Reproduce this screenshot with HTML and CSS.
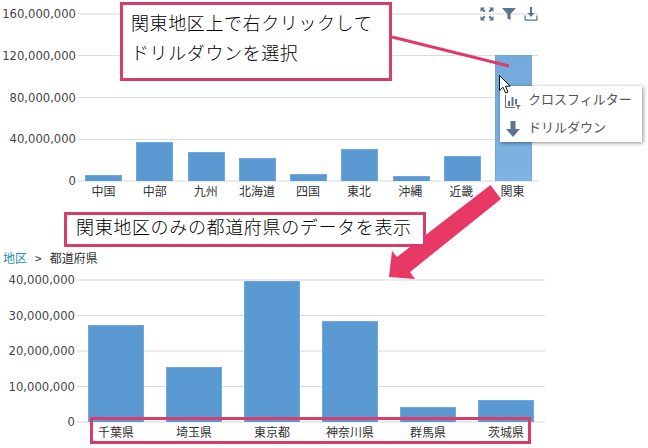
FILE: index.html
```html
<!DOCTYPE html>
<html lang="ja">
<head>
<meta charset="utf-8">
<title>ドリルダウン</title>
<link rel="stylesheet" href="styles.css">
</head>
<body>
<main class="stage">
  <section class="chart chart-top">
    <div class="y-axis">
      <span>160,000,000</span><span>120,000,000</span><span>80,000,000</span><span>40,000,000</span><span>0</span>
    </div>
    <div class="plot">
      <div class="grid"><i></i><i class="thin"></i><i class="thin"></i><i class="thin"></i><i></i></div>
      <div class="bars">
        <div class="bar" style="height:6px"></div>
        <div class="bar" style="height:39px"></div>
        <div class="bar" style="height:29px"></div>
        <div class="bar" style="height:23px"></div>
        <div class="bar" style="height:7px"></div>
        <div class="bar" style="height:32px"></div>
        <div class="bar" style="height:5px"></div>
        <div class="bar" style="height:25px"></div>
        <div class="bar bar-active" style="height:126px"></div>
      </div>
    </div>
    <div class="x-axis">
      <span>中国</span><span>中部</span><span>九州</span><span>北海道</span><span>四国</span><span>東北</span><span>沖縄</span><span>近畿</span><span>関東</span>
    </div>
  </section>

  <nav class="crumbs"><a>地区</a><b>&gt;</b><span>都道府県</span></nav>

  <section class="chart chart-bottom">
    <div class="y-axis">
      <span>40,000,000</span><span>30,000,000</span><span>20,000,000</span><span>10,000,000</span><span>0</span>
    </div>
    <div class="plot">
      <div class="grid"><i></i><i class="thin"></i><i></i><i class="thin"></i><i></i></div>
      <div class="bars">
        <div class="bar" style="height:97px"></div>
        <div class="bar" style="height:55px"></div>
        <div class="bar" style="height:141px"></div>
        <div class="bar" style="height:101px"></div>
        <div class="bar" style="height:15px"></div>
        <div class="bar" style="height:22px"></div>
      </div>
    </div>
    <div class="x-axis">
      <span>千葉県</span><span>埼玉県</span><span>東京都</span><span>神奈川県</span><span>群馬県</span><span>茨城県</span>
    </div>
  </section>

  <div class="toolbar">
    <svg class="tool" viewBox="0 0 14 14"><path d="M0.5 5V0.5H5L3.5 2L5.5 4L4 5.5L2 3.5ZM13.5 5V0.5H9L10.5 2L8.5 4L10 5.5L12 3.5ZM0.5 9V13.5H5L3.5 12L5.5 10L4 8.5L2 10.5ZM13.5 9V13.5H9L10.5 12L8.5 10L10 8.5L12 10.5Z"/></svg>
    <svg class="tool" viewBox="0 0 14 14"><path d="M0 1H14L8.6 7V13L5.4 11.5V7Z"/></svg>
    <svg class="tool" viewBox="0 0 14 14"><path d="M6 0H8V6H10.5L7 10L3.5 6H6ZM0.5 8.5H1.7V12.4H12.3V8.5H13.5V13.7H0.5Z"/></svg>
  </div>

  <svg class="marks" viewBox="0 0 648 448">
    <path class="leader" d="M392 37L509 66"/>
    <path class="big-arrow" d="M490.5 185L501 199L410 272L415 279L389 277L392 251L397 257Z"/>
  </svg>

  <div class="callout callout-a">関東地区上で右クリックして<br>ドリルダウンを選択</div>
  <div class="callout callout-b">関東地区のみの都道府県のデータを表示</div>
  <div class="callout callout-c"></div>

  <ul class="menu">
    <li>
      <svg class="menu-icon" viewBox="0 0 16 16"><path class="hollow" d="M0.5 2V14.5H10"/><path d="M3 8H5V13H3ZM6.5 4H8.5V13H6.5ZM10 6H12V11.5H10ZM10.5 12H16L13.9 14V16H12.6V14Z"/></svg>
      <span>クロスフィルター</span>
    </li>
    <li>
      <svg class="menu-icon" viewBox="0 0 16 16"><path d="M5.5 0H10.5V8H15L8 16L1 8H5.5Z"/></svg>
      <span>ドリルダウン</span>
    </li>
  </ul>

  <svg class="cursor" viewBox="0 0 12 19"><path d="M0.5 0.5V15.5L4 12.2L6.6 18L9 17L6.5 11.2H11.2Z"/></svg>
</main>
</body>
</html>
```

FILE: styles.css
```css
* { box-sizing: border-box; }
html, body { margin: 0; padding: 0; background: #fff; }
.stage {
  position: relative;
  width: 648px;
  height: 448px;
  overflow: hidden;
  background: #fff;
  color: #333;
  font-family: "Noto Sans CJK JP", "Noto Sans", sans-serif;
}
.chart { display: grid; }
.chart-top {
  grid-template-columns: 78px 460px;
  grid-template-rows: 167px 22px;
  padding-top: 14px;
}
.chart-bottom {
  grid-template-columns: 77px 468px;
  grid-template-rows: 142px 22px;
}
.y-axis {
  display: flex;
  flex-direction: column;
  justify-content: space-between;
  align-items: flex-end;
  margin: -8px 0;
  padding-right: 2px;
  font-family: "DejaVu Sans", sans-serif;
  font-size: 11.6px;
  line-height: 16px;
  color: #444;
}
.plot { position: relative; }
.grid {
  height: 100%;
  display: flex;
  flex-direction: column;
  justify-content: space-between;
}
.grid i { display: block; height: 2px; margin: -1px 0; background: #ebebee; }
.grid i.thin { height: 1px; margin: 0; background: #dcdce0; }
.bars {
  position: absolute;
  inset: 0;
  display: flex;
  align-items: flex-end;
}
.chart-top .bars { padding-left: 7px; gap: 14.25px; }
.chart-bottom .bars { padding-left: 11px; gap: 22px; }
.bar {
  background: #5b99d2;
  border: 1px solid #6ea8dc;
  border-bottom: 0;
}
.chart-top .bar { width: 37px; }
.chart-bottom .bar { width: 56px; }
.bar-active { background: linear-gradient(#74a9dc, #7fb3e2); }
.x-axis {
  grid-column: 2;
  display: flex;
  font-size: 12px;
  line-height: 20px;
  color: #333;
}
.x-axis span { text-align: center; }
.chart-top .x-axis span { width: 51.25px; }
.chart-bottom .x-axis span { width: 78px; }
.crumbs {
  display: flex;
  gap: 8px;
  height: 77px;
  padding: 47px 0 0 3px;
  font-size: 12px;
  line-height: 16px;
  color: #333;
}
.crumbs a { color: #2b8cab; }
.crumbs b { font-weight: 400; }
.toolbar {
  position: absolute;
  top: 7px;
  left: 480px;
  display: flex;
  gap: 8px;
}
.tool { width: 14px; height: 14px; fill: #5d7491; }
.marks { position: absolute; inset: 0; width: 648px; height: 448px; }
.leader { fill: none; stroke: #df3a68; stroke-width: 3; }
.big-arrow { fill: #e83865; }
.callout {
  position: absolute;
  border: 3px solid #d63d68;
  background: #fff;
  color: #000;
  font-size: 18px;
  font-weight: 300;
  white-space: nowrap;
}
.callout-a {
  left: 120px;
  top: 2px;
  width: 272px;
  height: 79px;
  padding: 2px 0 0 8px;
  line-height: 30px;
  letter-spacing: 0.6px;
}
.callout-b {
  left: 64px;
  top: 212px;
  width: 362px;
  height: 35px;
  padding-left: 9px;
  line-height: 23px;
  letter-spacing: 0.65px;
}
.callout-c {
  left: 90px;
  top: 417px;
  width: 441px;
  height: 27px;
  background: transparent;
}
.menu {
  position: absolute;
  left: 500px;
  top: 86px;
  width: 142px;
  height: 56px;
  margin: 0;
  padding: 0;
  list-style: none;
  background: #fff;
  box-shadow: 1px 1px 4px rgba(0, 0, 0, .45);
  font-size: 13px;
  color: #555;
}
.menu li {
  display: flex;
  align-items: center;
  height: 28px;
  padding-left: 5px;
  gap: 8px;
}
.menu li span { margin: -4px 0 0 -1px; }
.menu-icon { width: 16px; height: 16px; fill: #5d7491; flex: none; margin-top: 2px; }
.menu-icon .hollow { fill: none; stroke: #5d7491; stroke-width: 1; }
.cursor {
  position: absolute;
  left: 499px;
  top: 75px;
  width: 12px;
  height: 19px;
  fill: #fff;
  stroke: #111;
  stroke-width: 1;
}
```
